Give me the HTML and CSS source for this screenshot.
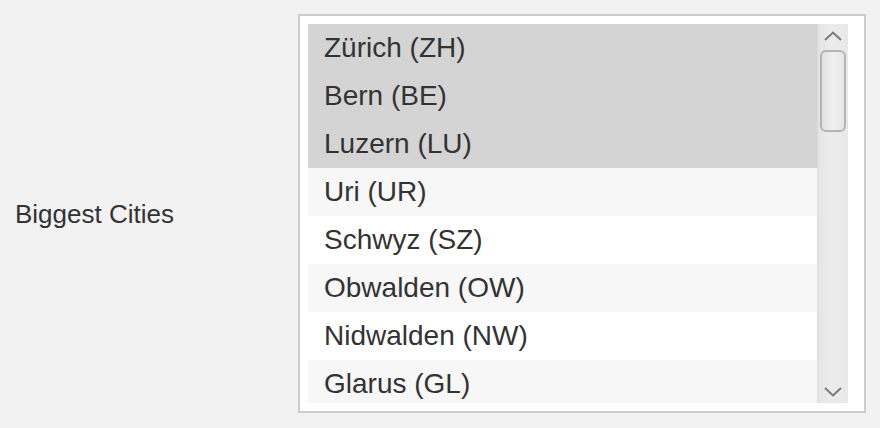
FILE: index.html
```html
<!DOCTYPE html>
<html lang="en">
<head>
<meta charset="utf-8">
<title>Biggest Cities</title>
<link rel="stylesheet" href="styles.css">
</head>
<body>
<div class="field">
  <label class="field-label">Biggest Cities</label>
  <div class="select-box">
    <div class="listbox">
      <ul class="options">
        <li class="option selected">Zürich (ZH)</li>
        <li class="option selected">Bern (BE)</li>
        <li class="option selected">Luzern (LU)</li>
        <li class="option alt">Uri (UR)</li>
        <li class="option">Schwyz (SZ)</li>
        <li class="option alt">Obwalden (OW)</li>
        <li class="option">Nidwalden (NW)</li>
        <li class="option alt">Glarus (GL)</li>
      </ul>
      <div class="scrollbar">
        <svg class="arrow" width="18" height="10" viewBox="0 0 18 10"><path d="M1 9 L9 1.5 L17 9" fill="none" stroke="#7a7a7a" stroke-width="2"/></svg>
        <div class="thumb"></div>
        <div class="track-fill"></div>
        <svg class="arrow" width="18" height="10" viewBox="0 0 18 10"><path d="M1 1 L9 8.5 L17 1" fill="none" stroke="#7a7a7a" stroke-width="2"/></svg>
      </div>
    </div>
  </div>
</div>
</body>
</html>
```
FILE: styles.css
```css
html, body {
  margin: 0;
  padding: 0;
  background: #f2f2f2;
}
body {
  font-family: "Liberation Sans", Arial, Helvetica, sans-serif;
  color: #333333;
  font-size: 26px;
}
.field {
  display: flex;
  align-items: center;
  padding: 14px 14px 15px 15px;
}
.field-label {
  width: 283px;
  line-height: 30px;
}
.select-box {
  width: 540px;
  border: 2px solid #cccccc;
  background: #ffffff;
  padding: 8px 16px 8px 8px;
  box-sizing: content-box;
}
.listbox {
  display: flex;
  height: 379px;
  overflow: hidden;
}
.options {
  flex: 1;
  list-style: none;
  margin: 0;
  padding: 0;
  overflow: hidden;
  font-size: 28px;
}
.option {
  height: 48px;
  line-height: 48px;
  padding-left: 16px;
  background: #ffffff;
  white-space: nowrap;
}
.option.alt {
  background: #f7f7f7;
}
.option.selected {
  background: #d4d4d4;
}
.scrollbar {
  width: 31px;
  display: flex;
  flex-direction: column;
  align-items: center;
  background: linear-gradient(to right, #dcdcdc 0px, #e6e6e6 3px, #ececec 14px, #e8e8e8 31px);
}
.arrow {
  flex: none;
  margin: 7px 0 6px;
}
.scrollbar .arrow:last-child {
  margin: 6px 0 6px;
}
.thumb {
  flex: none;
  width: 26px;
  height: 82px;
  margin-top: 3px;
  box-sizing: border-box;
  border: 2px solid #b4b4b4;
  border-radius: 6px;
  background: linear-gradient(to right, #e2e2e2, #f0f0f0 50%, #e6e6e6);
}
.track-fill {
  flex: 1;
}
```
